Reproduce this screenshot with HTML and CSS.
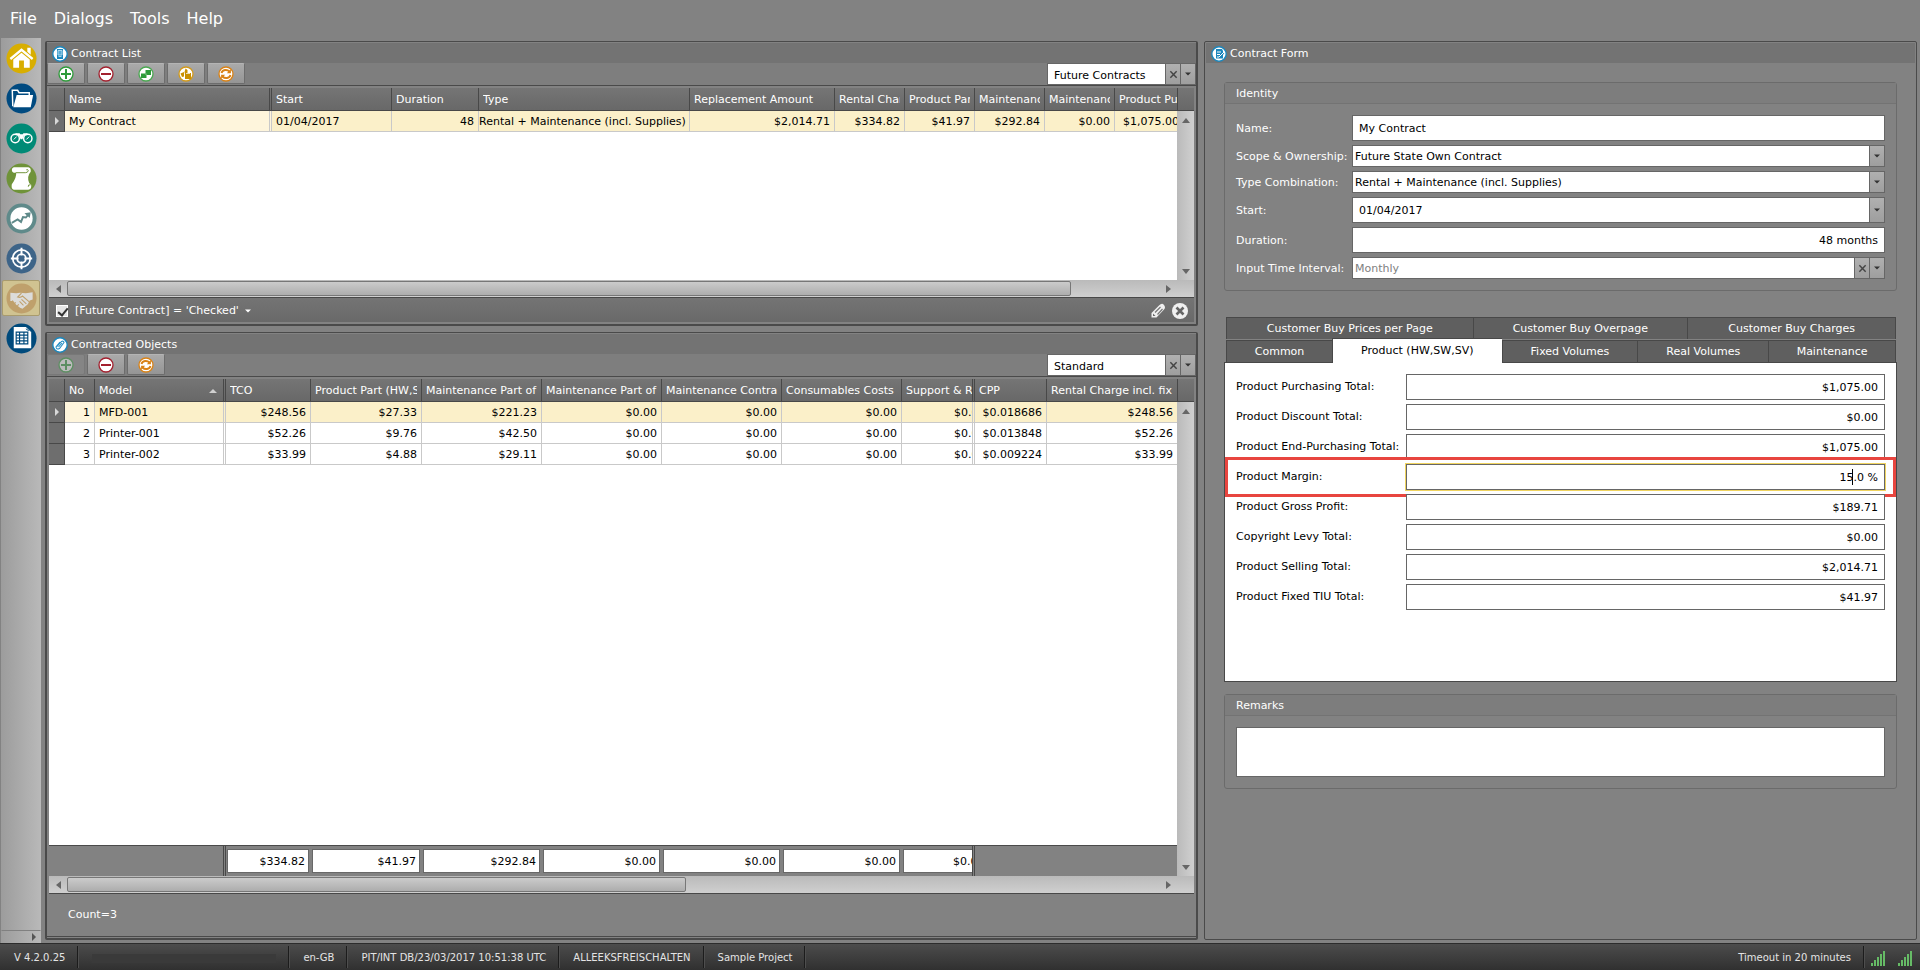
FILE: index.html
```html
<!DOCTYPE html>
<html lang="en">
<head>
<meta charset="utf-8">
<title>Contracts</title>
<link rel="stylesheet" href="styles.css">
</head>
<body>
<svg class="defs" aria-hidden="true">
  <symbol id="i-add" viewBox="0 0 16 16"><circle cx="8" cy="8" r="7" fill="#fff" stroke="#2e9b3a" stroke-width="1.3"/><path d="M8 3v10M3 8h10" stroke="#2e9b3a" stroke-width="2"/></symbol>
  <symbol id="i-remove" viewBox="0 0 16 16"><circle cx="8" cy="8" r="7" fill="#fff" stroke="#a3202e" stroke-width="1.3"/><path d="M3 8h10" stroke="#a3202e" stroke-width="2"/></symbol>
  <symbol id="i-copy" viewBox="0 0 16 16"><circle cx="8" cy="8" r="7" fill="#fff" stroke="#4aa851" stroke-width="1.3"/><path d="M7.500 4H13v5H7.500zM3 7.500h5.500V12H3z" fill="#2e9b3a"/><path d="M7.500 7.500h1V9h-1z" fill="#8fce94"/></symbol>
  <symbol id="i-lock" viewBox="0 0 16 16"><circle cx="8" cy="8" r="7" fill="#fff" stroke="#d29a1c" stroke-width="1.3"/><path d="M2.500 7.500L6 6v4.500l-2 .5zM6.500 6l1-3.500 2 1.500v3H13v6H7V8z" fill="#c98f00"/><path d="M8 7.500h4" stroke="#fff" stroke-width=".7"/></symbol>
  <symbol id="i-refresh" viewBox="0 0 16 16"><circle cx="8" cy="8" r="7" fill="#fff" stroke="#d98216" stroke-width="1.3"/><path d="M3.500 7C4.500 3.500 9 3 11.500 5.500M12.500 9C11.500 12.500 7 13 4.500 10.500" fill="none" stroke="#d98216" stroke-width="1.900"/><path d="M12.900 3v4.200H8.800zM3.100 13V8.800h4.100z" fill="#d98216"/></symbol>
  <symbol id="i-close" viewBox="0 0 10 10"><path d="M1.500 1.500l7 7m0-7l-7 7" stroke="#444" stroke-width="1.600"/></symbol>
  <symbol id="i-down" viewBox="0 0 6 4"><path d="M0 .5h6L3 3.500z" fill="#333"/></symbol>
</svg>

<nav class="menubar">
  <button>File</button><button>Dialogs</button><button>Tools</button><button>Help</button>
</nav>

<main class="main">
  <aside class="sidebar">
    <button aria-label="Home"><svg viewBox="0 0 32 32"><circle cx="16" cy="16" r="15.500" fill="#d8ae00"/><path d="M4.500 16.500L16 7l11.500 9.500" fill="none" stroke="#fff" stroke-width="2.400"/><path d="M22 5h3.500v7L22 9zM7.500 17L16 10l8.500 7v8.500h-6V18h-5v7.500h-6z" fill="#fff"/></svg></button>
    <button aria-label="Projects"><svg viewBox="0 0 32 32"><circle cx="16" cy="16" r="15.500" fill="#004a80"/><path d="M7 24L6.500 7.500h5.500l1.500 2.500H24v3" fill="none" stroke="#fff" stroke-width="1.500"/><path d="M11 12.500h17L25.500 25H7.500z" fill="#fff"/></svg></button>
    <button aria-label="Search"><svg viewBox="0 0 32 32"><circle cx="16" cy="16" r="15.500" fill="#008a76"/><circle cx="9.500" cy="16" r="4.300" fill="none" stroke="#fff" stroke-width="1.500"/><circle cx="22.500" cy="16" r="4.300" fill="none" stroke="#fff" stroke-width="1.500"/><path d="M10 10.500h4l.7 1h2.600l.7-1h4l1 2-4.500.3-1.500 4h-2l-1.500-4-4.500-.3z" fill="#fff"/><path d="M8 17l3-3m10 3l3-3" stroke="#fff"/></svg></button>
    <button aria-label="Scroll"><svg viewBox="0 0 32 32"><circle cx="16" cy="16" r="15.500" fill="#6f9339"/><path d="M8 4.500H23Q26 5 25.500 9 21 14 24 21l2 1.500Q26.500 27.500 23 27.500H8Q5 27 6 22 11 15 10.500 10H8Q6 9.500 6 7.300 6 5 8 4.500z" fill="#fff"/><path d="M10 10h10q2.500 0 3-2-.5-2-2-1M25.500 22.500q-3-.5-2.500 2" fill="none" stroke="#6f9339"/></svg></button>
    <button aria-label="Trends"><svg viewBox="0 0 32 32"><circle cx="16" cy="16" r="15.500" fill="#5f8a8a"/><circle cx="16" cy="16" r="11.500" fill="#fff"/><path d="M6 20.500l6-3.500 3.500 2.500 2-5 3 .5 3.500-4" fill="none" stroke="#5f8a8a" stroke-width="2"/><path d="M19 10.500l6.500-1-1 6z" fill="#5f8a8a"/></svg></button>
    <button aria-label="Targets"><svg viewBox="0 0 32 32"><circle cx="16" cy="16" r="15.500" fill="#3d6488"/><circle cx="16" cy="16" r="9" fill="none" stroke="#fff" stroke-width="1.800"/><circle cx="16" cy="16" r="4.500" fill="none" stroke="#fff" stroke-width="1.800"/><path d="M16 5v8m0 6v8M5 16h8m6 0h8" stroke="#fff" stroke-width="2"/></svg></button>
    <button class="selected" aria-label="Contracts"><svg viewBox="0 0 32 32"><circle cx="16" cy="16" r="15.500" fill="#bfa06c"/><path d="M4.500 10l6 .5 4-.5 6 .5 7-1v7.500l-3 1-2 4-5.500 4.500-2.500-1-4-3-3-4H4.500z" fill="#dcdcda"/><path d="M16 10.500l-4 4q3 1 5-1l7 6M16 17l5 4.500M14 19l4 4M7 18l-1 2m4 0l-2 2m5 0l-2 3" fill="none" stroke="#bfa06c" stroke-width="1.100"/></svg></button>
    <button aria-label="Reports"><svg viewBox="0 0 32 32"><circle cx="16" cy="16" r="15.500" fill="#004a7c"/><path d="M8 4h13l5 5v17H8z" fill="#fff"/><path d="M10.500 9.500h12v12h-12zM10.500 12.500h12m-12 3h12m-12 3h12M14 9.500v12m4.500-12v12" fill="none" stroke="#004a7c" stroke-width="1.200"/><path d="M20 3l6 6M20.500 6l3 2" stroke="#004a7c"/></svg></button>
    <button class="expander" aria-label="Expand sidebar"><svg viewBox="0 0 4 8"><path d="M0 0l4 4-4 4z" fill="#555"/></svg></button>
  </aside>

  <div class="workspace">
    <div class="lists">
      <section class="panel">
        <h2 class="title"><svg viewBox="0 0 16 16"><circle cx="8" cy="8" r="7.200" fill="#fff" stroke="#1b87bd" stroke-width="1.400"/><path d="M5 3h6v10H5z" fill="#1b87bd"/><path d="M6 4.500h4V9H6zM6.500 10.500h3" stroke="#a9d6ec" fill="#56abd4"/></svg>Contract List</h2>
        <div class="toolbar">
          <button class="tool" aria-label="Add"><svg><use href="#i-add"/></svg></button>
          <button class="tool" aria-label="Remove"><svg><use href="#i-remove"/></svg></button>
          <button class="tool" aria-label="Duplicate"><svg><use href="#i-copy"/></svg></button>
          <button class="tool" aria-label="Lock"><svg><use href="#i-lock"/></svg></button>
          <button class="tool" aria-label="Refresh"><svg><use href="#i-refresh"/></svg></button>
          <div class="combo view">
            <select aria-label="View"><option>Future Contracts</option></select>
            <button class="square" aria-label="Clear view"><svg class="x"><use href="#i-close"/></svg></button>
            <button class="square" aria-label="Choose view"><svg class="down"><use href="#i-down"/></svg></button>
          </div>
        </div>
        <div class="grid short">
          <div class="sheet">
            <table>
              <colgroup><col class="w16"><col class="w207"><col class="w120"><col class="w87"><col class="w211"><col class="w145"><col class="w70"><col class="w70"><col class="w70"><col class="w70"><col></colgroup>
              <thead><tr><th></th><th class="dbl"><div>Name</div></th><th><div>Start</div></th><th><div>Duration</div></th><th><div>Type</div></th><th><div>Replacement Amount</div></th><th><div>Rental Charge</div></th><th><div>Product Part</div></th><th><div>Maintenance</div></th><th><div>Maintenance</div></th><th class="cut">Product Purchasing</th></tr></thead>
              <tbody><tr class="current"><th><i class="pointer"></i></th><td class="focus dbl">My Contract</td><td>01/04/2017</td><td class="num">48</td><td class="tight">Rental + Maintenance (incl. Supplies)</td><td class="num">$2,014.71</td><td class="num">$334.82</td><td class="num">$41.97</td><td class="num">$292.84</td><td class="num">$0.00</td><td class="cut">$1,075.00</td></tr></tbody>
            </table>
          </div>
          <div class="vside"><div class="corner"></div><div class="vscroll"><i class="up"></i><i class="dn"></i></div></div>
        </div>
        <div class="hscroll"><i class="lt"></i><div class="track"><div class="thumb" style="width:91.4%"></div></div><i class="rt"></i><span class="pad"></span></div>
        <div class="filterbar">
          <label><input type="checkbox" checked>[Future Contract] = 'Checked'</label>
          <svg class="caretdown" viewBox="0 0 6 4"><path d="M0 .5h6L3 3.500z" fill="#fff"/></svg>
          <button class="plain end" aria-label="Edit filter"><svg viewBox="0 0 16 16"><path d="M1.500 14.500V10L9 2.500Q12-.5 14 2t0 4.500L6.500 14.500z" fill="#f0f0f0"/><path d="M5 9.500l5.500-5.500M7.500 11.500l5-5.500" stroke="#777" stroke-width="1.200"/><path d="M3 10.500l2.500 2.500H3z" fill="#666"/></svg></button>
          <button class="plain" aria-label="Remove filter"><svg viewBox="0 0 16 16"><circle cx="8" cy="8" r="8" fill="#f0f0f0"/><path d="M4.500 4.500l7 7m0-7l-7 7" stroke="#666" stroke-width="2.600"/></svg></button>
        </div>
      </section>

      <section class="panel tall">
        <h2 class="title"><svg viewBox="0 0 16 16"><circle cx="8" cy="8" r="7.200" fill="#fff" stroke="#1b87bd" stroke-width="1.400"/><path d="M5 9.500l4.500-5q2-1 2.500 1L7.500 11.500Q4.500 13 4 10l4-5M6.500 10l3.500-4" fill="none" stroke="#2990c5" stroke-width="1.100"/></svg>Contracted Objects</h2>
        <div class="toolbar">
          <button class="tool off" aria-label="Add object" disabled><svg><use href="#i-add"/></svg></button>
          <button class="tool" aria-label="Remove object"><svg><use href="#i-remove"/></svg></button>
          <button class="tool" aria-label="Refresh objects"><svg><use href="#i-refresh"/></svg></button>
          <div class="combo view">
            <select aria-label="Object view"><option>Standard</option></select>
            <button class="square" aria-label="Clear object view"><svg class="x"><use href="#i-close"/></svg></button>
            <button class="square" aria-label="Choose object view"><svg class="down"><use href="#i-down"/></svg></button>
          </div>
        </div>
        <div class="grid">
          <div class="sheet">
            <table>
              <colgroup><col class="w16"><col class="w30"><col class="w131"><col class="w85"><col class="w111"><col class="w120"><col class="w120"><col class="w120"><col class="w120"><col class="w73"><col class="w72"><col></colgroup>
              <thead><tr><th></th><th><div>No</div></th><th class="dbl"><div class="sorted">Model<i class="asc"></i></div></th><th><div>TCO</div></th><th><div>Product Part (HW,SW,SV)</div></th><th><div>Maintenance Part of TCO</div></th><th><div>Maintenance Part of CPP</div></th><th><div>Maintenance Contract</div></th><th><div>Consumables Costs</div></th><th class="dbl cut">Support &amp; Repair</th><th><div>CPP</div></th><th class="last"><div>Rental Charge incl. fix</div></th></tr></thead>
              <tbody>
                <tr class="current"><th><i class="pointer"></i></th><td class="num focus">1</td><td class="dbl">MFD-001</td><td class="num">$248.56</td><td class="num">$27.33</td><td class="num">$221.23</td><td class="num">$0.00</td><td class="num">$0.00</td><td class="num">$0.00</td><td class="dbl under">$0.00</td><td class="num">$0.018686</td><td class="num last">$248.56</td></tr>
                <tr><th></th><td class="num">2</td><td class="dbl">Printer-001</td><td class="num">$52.26</td><td class="num">$9.76</td><td class="num">$42.50</td><td class="num">$0.00</td><td class="num">$0.00</td><td class="num">$0.00</td><td class="dbl under">$0.00</td><td class="num">$0.013848</td><td class="num last">$52.26</td></tr>
                <tr><th></th><td class="num">3</td><td class="dbl">Printer-002</td><td class="num">$33.99</td><td class="num">$4.88</td><td class="num">$29.11</td><td class="num">$0.00</td><td class="num">$0.00</td><td class="num">$0.00</td><td class="dbl under">$0.00</td><td class="num">$0.009224</td><td class="num last">$33.99</td></tr>
              </tbody>
            </table>
            <table class="totals">
              <colgroup><col class="w177"><col class="w85"><col class="w111"><col class="w120"><col class="w120"><col class="w120"><col class="w120"><col class="w73"><col></colgroup>
              <tbody><tr><td class="dbl"></td><td><div>$334.82</div></td><td><div>$41.97</div></td><td><div>$292.84</div></td><td><div>$0.00</div></td><td><div>$0.00</div></td><td><div>$0.00</div></td><td class="dbl part"><div>$0.00</div></td><td></td></tr></tbody>
            </table>
          </div>
          <div class="vside"><div class="corner"></div><div class="vscroll"><i class="up"></i><i class="dn"></i></div></div>
        </div>
        <div class="hscroll"><i class="lt"></i><div class="track"><div class="thumb" style="width:56.3%"></div></div><i class="rt"></i><span class="pad"></span></div>
        <div class="count">Count=3</div>
      </section>
    </div>

    <section class="panel form">
      <h2 class="title"><svg viewBox="0 0 16 16"><circle cx="8" cy="8" r="7.200" fill="#fff" stroke="#1b87bd" stroke-width="1.400"/><path d="M5 3h6l1 2v7.500H5z" fill="#1b87bd"/><path d="M6 6h4M6 8.500h3M6 11h2" stroke="#fff"/><path d="M8 11l5-5" stroke="#fff"/><path d="M9 12l4-5" stroke="#1b87bd"/></svg>Contract Form</h2>
      <div class="formbody">
        <section class="group">
          <h3>Identity</h3>
          <div class="fields">
            <label for="name">Name:</label><input class="box" id="name" value="My Contract">
            <label for="scope">Scope &amp; Ownership:</label>
            <div class="combo"><select id="scope"><option>Future State Own Contract</option></select><button class="square" aria-label="Open scope"><svg class="down"><use href="#i-down"/></svg></button></div>
            <label for="type">Type Combination:</label>
            <div class="combo"><select id="type"><option>Rental + Maintenance (incl. Supplies)</option></select><button class="square" aria-label="Open type"><svg class="down"><use href="#i-down"/></svg></button></div>
            <label for="start">Start:</label>
            <div class="combo date"><input id="start" value="01/04/2017"><button class="square" aria-label="Open calendar"><svg class="down"><use href="#i-down"/></svg></button></div>
            <label for="duration">Duration:</label><input class="box right" id="duration" value="48 months">
            <label for="interval">Input Time Interval:</label>
            <div class="combo muted"><select id="interval"><option>Monthly</option></select><button class="square" aria-label="Clear interval"><svg class="x"><use href="#i-close"/></svg></button><button class="square" aria-label="Open interval"><svg class="down"><use href="#i-down"/></svg></button></div>
          </div>
        </section>

        <section class="tabs">
          <div class="tabrow upper"><button>Customer Buy Prices per Page</button><button>Customer Buy Overpage</button><button>Customer Buy Charges</button></div>
          <div class="tabrow lower"><button>Common</button><button class="active">Product (HW,SW,SV)</button><button>Fixed Volumes</button><button>Real Volumes</button><button>Maintenance</button></div>
          <div class="page">
            <div class="line"><label for="p1">Product Purchasing Total:</label><input class="box right" id="p1" value="$1,075.00"></div>
            <div class="line"><label for="p2">Product Discount Total:</label><input class="box right" id="p2" value="$0.00"></div>
            <div class="line"><label for="p3">Product End-Purchasing Total:</label><input class="box right" id="p3" value="$1,075.00"></div>
            <div class="line marked"><label for="p4">Product Margin:</label><input class="box right editing" id="p4" value="15.0 %"><span class="textcaret"></span></div>
            <div class="line"><label for="p5">Product Gross Profit:</label><input class="box right" id="p5" value="$189.71"></div>
            <div class="line"><label for="p6">Copyright Levy Total:</label><input class="box right" id="p6" value="$0.00"></div>
            <div class="line"><label for="p7">Product Selling Total:</label><input class="box right" id="p7" value="$2,014.71"></div>
            <div class="line"><label for="p8">Product Fixed TIU Total:</label><input class="box right" id="p8" value="$41.97"></div>
          </div>
        </section>

        <section class="group remarks">
          <h3 id="remarks">Remarks</h3>
          <textarea aria-labelledby="remarks"></textarea>
        </section>
      </div>
    </section>
  </div>
</main>

<footer class="status">
  <span>V 4.2.0.25</span>
  <span><i class="progress"></i></span>
  <span>en-GB</span>
  <span>PIT/INT DB/23/03/2017 10:51:38 UTC</span>
  <span>ALLEEKSFREISCHALTEN</span>
  <span>Sample Project</span>
  <span class="timeout">Timeout in 20 minutes</span>
  <svg class="signal" viewBox="0 0 14 15"><path d="M0 12h2v3H0zM3 9h2v6H3zM6 6h2v9H6zM9 3h2v12H9zM12 0h2v15h-2z"/></svg>
  <svg class="signal" viewBox="0 0 14 15"><path d="M0 12h2v3H0zM3 9h2v6H3zM6 6h2v9H6zM9 3h2v12H9zM12 0h2v15h-2z"/></svg>
</footer>
</body>
</html>
```
FILE: styles.css
```css
* { box-sizing: border-box; }

body {
  margin: 0;
  height: 100vh;
  display: flex;
  flex-direction: column;
  background: #828282;
  color: #fff;
  font: 11px/14px Verdana, "DejaVu Sans", sans-serif;
}

button, input, select, textarea {
  font: inherit;
  color: inherit;
  margin: 0;
  padding: 0;
  border: 0;
  border-radius: 0;
  outline: 0;
  background: none;
}

h2, h3 { margin: 0; font: inherit; }
.defs { display: none; }
i { display: block; flex: none; }

/* Menu */
.menubar { display: flex; flex: none; gap: 1px; height: 38px; padding: 0 2px; }
.menubar button { padding: 0 8px; font-size: 16px; }

.main { flex: 1; display: flex; min-height: 0; }

/* Sidebar */
.sidebar {
  flex: none;
  width: 40px;
  margin-left: 1px;
  display: flex;
  flex-direction: column;
  align-items: center;
  gap: 4px;
  padding-top: 2px;
  background: linear-gradient(90deg, #9c9c9c, #b9b9b9);
}
.sidebar button { width: 38px; height: 36px; display: flex; align-items: center; justify-content: center; border: 1px solid transparent; }
.sidebar svg { width: 31px; height: 31px; }
.sidebar .selected { background: #d0c391; border-color: #a89b6e; border-radius: 2px; }
.sidebar .expander { margin-top: auto; width: 100%; height: 13px; justify-content: flex-end; padding-right: 4px; border-top: 1px solid #808080; }
.sidebar .expander svg { width: 4px; height: 8px; }

/* Panels */
.workspace {
  flex: 1;
  min-width: 0;
  display: grid;
  grid-template-columns: 1153fr 713fr;
  gap: 6px;
  padding: 3px 3px 3px 4px;
}
.lists { display: flex; flex-direction: column; gap: 6px; min-width: 0; min-height: 0; }
.panel {
  display: flex;
  flex-direction: column;
  min-width: 0;
  border: 2px solid #4a4a4a;
  border-top-width: 1px;
  border-radius: 2px;
  padding-top: 1px;
}
.tall { flex: 1; min-height: 0; }
.form { border-width: 1px; }
.title { flex: none; height: 20px; display: flex; align-items: center; gap: 3px; padding: 1px 0 0 5px; background: #737373; }
.title svg { width: 16px; height: 16px; }
.form .title { margin: 0 1px; }

.toolbar { flex: none; height: 23px; display: flex; gap: 2px; align-items: flex-start; background: #7e7e7e; border-bottom: 1px solid #4a4a4a; }
.tool {
  width: 38px;
  height: 21px;
  display: flex;
  align-items: center;
  justify-content: center;
  background: linear-gradient(#aaa, #959595);
  border: 1px solid #6c6c6c;
  border-top-color: #b4b4b4;
  border-radius: 2px;
}
.tool svg { width: 16px; height: 16px; }
.off { background: #858585; border-color: #787878; }
.off svg { opacity: .45; }

/* Combo boxes */
.combo { display: flex; height: 22px; background: #fff; color: #000; border: 1px solid #666; }
.combo select, .combo input { appearance: none; flex: 1; min-width: 0; padding: 1px 0 0 2px; }
.combo.date { height: 26px; }
.combo.date input { padding-left: 6px; }
.combo.muted select { color: #808080; }
.square { flex: none; width: 15px; display: flex; align-items: center; justify-content: center; background: linear-gradient(#b0b0b0, #9e9e9e); border-left: 1px solid #666; }
.x { width: 9px; height: 9px; }
.down { width: 6px; height: 4px; }
.view { width: 149px; margin-left: auto; }
.combo.view select { padding: 4px 0 0 6px; }

/* Grids */
.grid { flex: 1; min-height: 0; display: grid; grid-template-columns: 1fr 17px; margin: 2px 2px 0; background: #fff; }
.short { flex: none; height: 192px; }
.sheet { display: flex; flex-direction: column; min-width: 0; overflow: hidden; color: #000; }
table { width: 100%; table-layout: fixed; border-collapse: separate; border-spacing: 0; }
th, td { padding: 2px 4px 0; height: 21px; overflow: hidden; white-space: nowrap; text-align: left; font-weight: normal; }
td { border-right: 1px solid #c9c9c9; border-bottom: 1px solid #c9c9c9; }
th { color: #fff; border-right: 1px solid #484848; border-bottom: 1px solid #484848; }
thead th { height: 23px; background: linear-gradient(#757575, #686868); }
tbody th { padding: 0 6px; background: #6e6e6e; }
th div { overflow: hidden; }
.dbl { border-right-width: 3px; border-right-style: double; }
.num { text-align: right; }
.tight { padding-left: 0; padding-right: 0; }
.cut { padding-right: 0; border-right: 0; }
th.cut.dbl { border-right: 3px double #484848; }
td.cut { padding-left: 8px; }
.last { border-right: 0; }
.under { padding: 2px 0 0 52px; }
.current td { background: #fbf0c9; }
.current .focus { background: #fef5dc; }
.pointer { border-left: 4px solid #d8d8d8; border-top: 4px solid transparent; border-bottom: 4px solid transparent; width: 4px; }
.sorted { display: flex; align-items: center; justify-content: space-between; padding-right: 2px; }
.asc { border-bottom: 4px solid #d0d0d0; border-left: 4px solid transparent; border-right: 4px solid transparent; }

.w16 { width: 16px; } .w30 { width: 30px; } .w70 { width: 70px; } .w72 { width: 72px; }
.w73 { width: 73px; } .w85 { width: 85px; } .w87 { width: 87px; } .w111 { width: 111px; }
.w120 { width: 120px; } .w131 { width: 131px; } .w145 { width: 145px; } .w177 { width: 177px; }
.w207 { width: 207px; } .w211 { width: 211px; }

.totals { margin-top: auto; background: #828282; border-top: 1px solid #4a4a4a; }
.totals td { height: 30px; padding: 0 2px 0 1px; border: 0; vertical-align: middle; }
.totals td.dbl { border-right: 3px double #484848; }
.totals div { height: 24px; padding: 5px 3px 3px; text-align: right; background: #fff; border: 1px solid #686868; overflow: hidden; }
.totals td.part { padding-right: 0; }
.totals .part div { text-align: left; padding: 5px 0 3px 49px; border-right: 0; }

.vside { display: flex; flex-direction: column; }
.corner { flex: none; height: 23px; background: linear-gradient(#757575, #686868); border-left: 1px solid #484848; border-bottom: 1px solid #484848; }
.vscroll { flex: 1; display: flex; flex-direction: column; justify-content: space-between; align-items: center; padding: 7px 0 6px; background: linear-gradient(90deg, #bababa, #d0d0d0); }
.up { border-bottom: 5px solid #666; border-left: 4px solid transparent; border-right: 4px solid transparent; }
.dn { border-top: 5px solid #666; border-left: 4px solid transparent; border-right: 4px solid transparent; }
.lt { border-right: 5px solid #666; border-top: 4px solid transparent; border-bottom: 4px solid transparent; }
.rt { border-left: 5px solid #666; border-top: 4px solid transparent; border-bottom: 4px solid transparent; }
.hscroll { flex: none; height: 18px; display: flex; align-items: center; margin: 0 2px; padding-left: 7px; background: linear-gradient(#bababa, #cfcfcf); border-bottom: 1px solid #484848; }
.track { flex: 1; margin: 0 0 0 6px; }
.thumb { height: 15px; background: linear-gradient(#cbcbcb, #adadad); border: 1px solid #777; border-radius: 2px; }
.pad { width: 23px; }

.filterbar { flex: none; height: 24px; display: flex; align-items: center; gap: 6px; margin: 0 2px 2px; padding: 1px 6px 0 7px; background: linear-gradient(#747474, #696969); }
.filterbar label { display: flex; align-items: center; gap: 7px; }
.filterbar input { width: 12px; height: 12px; appearance: none; background: #e4e4e4; border: 1px solid #fff; position: relative; }
.filterbar input::after { content: ""; position: absolute; left: 3px; top: 0; width: 4px; height: 8px; border: solid #333; border-width: 0 2px 2px 0; transform: rotate(40deg); }
.caretdown { width: 6px; height: 4px; }
.plain { width: 16px; height: 16px; }
.plain svg { display: block; width: 16px; height: 16px; }
.end { margin-left: auto; }

.count { flex: none; height: 43px; padding: 14px 21px 0; border-bottom: 1px solid #4a4a4a; margin-bottom: 1px; }

/* Contract form */
.formbody { padding: 19px 19px 0; }
.group { border: 1px solid #6b6b6b; border-radius: 3px; }
.group h3 { height: 21px; padding: 4px 11px 2px; background: #7d7d7d; border-bottom: 1px solid #737373; }
.fields { display: grid; grid-template-columns: 112px 1fr; align-items: center; gap: 4px; padding: 11px; }
.fields label { white-space: nowrap; padding-top: 1px; }
.box { width: 100%; height: 26px; padding: 0 6px; background: #fff; color: #000; border: 1px solid #666; }
.right { text-align: right; }

.tabs { margin-top: 26px; }
.tabrow { display: flex; height: 22px; margin: 0 1px 0 2px; }
.tabrow button { background: #5f5f5f; border: 1px solid #484848; border-right-width: 0; border-bottom-width: 0; }
.tabrow button:last-child { border-right-width: 1px; }
.upper button { flex: 247 1 0; }
.upper button:nth-child(2) { flex-grow: 215; }
.upper button:nth-child(3) { flex-grow: 208; }
.lower { margin-top: 1px; }
.lower button { flex: 106 1 0; }
.lower .active { flex-grow: 170; background: #fff; color: #000; height: 25px; margin-top: -2px; border-color: #484848; position: relative; }
.lower button:nth-child(3) { flex-grow: 136; }
.lower button:nth-child(4) { flex-grow: 131; }
.lower button:nth-child(5) { flex-grow: 127; }
.page { display: flex; flex-direction: column; gap: 4px; min-height: 320px; padding: 11px; background: #fff; color: #000; border: 1px solid #484848; }
.line { display: grid; grid-template-columns: 170px 1fr; align-items: center; position: relative; }
.line label { white-space: nowrap; }
.editing { box-shadow: 0 0 0 1px #f0d460; }
.marked::after { content: ""; position: absolute; inset: -7px -11px; border: 3px solid #e8453f; }
.textcaret { position: absolute; right: 32px; top: 5px; width: 1px; height: 16px; background: #000; }

.remarks { margin-top: 12px; }
.remarks textarea { display: block; width: calc(100% - 22px); height: 50px; margin: 11px; background: #fff; color: #000; border: 1px solid #666; resize: none; }

/* Status bar */
.status {
  flex: none;
  height: 27px;
  display: flex;
  align-items: center;
  background: linear-gradient(#4c4c4c, #303030);
  border-top: 1px solid #2c2c2c;
  font-size: 10px;
  color: #e4e4e4;
}
.status span { height: 22px; display: flex; align-items: center; padding: 2px 12px 0 14px; border-right: 1px solid #1c1c1c; box-shadow: 1px 0 0 #4e4e4e; white-space: nowrap; }
.progress { width: 184px; height: 9px; background: #3a3a3a; }
.status .timeout { margin-left: auto; }
.signal { width: 14px; height: 15px; margin: 2px 6px 0 7px; fill: #66bb66; }
.signal + .signal { margin-right: 8px; }
```
